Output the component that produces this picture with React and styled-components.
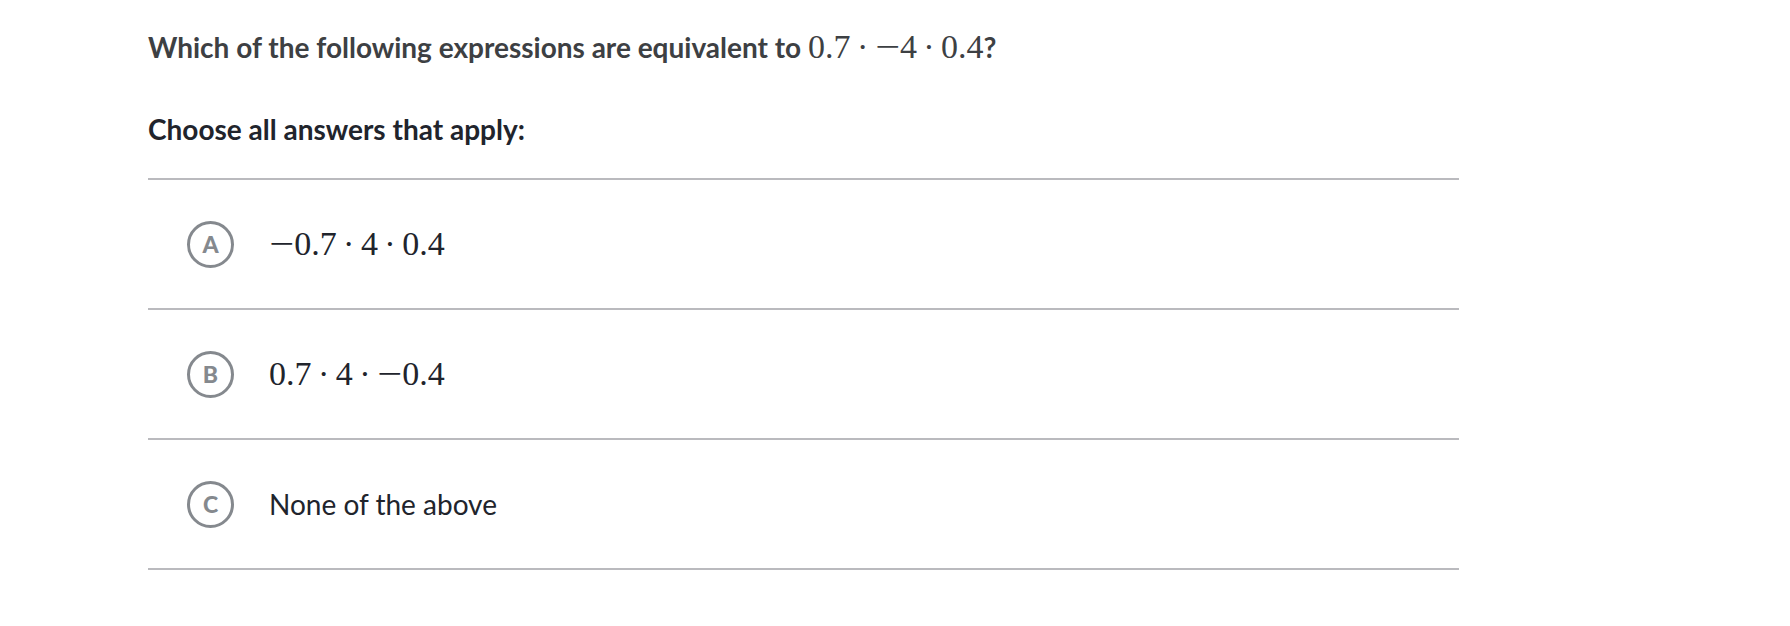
import React from "react";
import styled, { createGlobalStyle } from "styled-components";

const GlobalStyle = createGlobalStyle`
  html, body {
    margin: 0;
    padding: 0;
    background: #ffffff;
  }
  body {
    font-family: Lato, "Noto Sans", sans-serif;
    color: #21242c;
  }
`;

const Page = styled.div`
  padding: 27px 0 0 148px;
  width: 1311px;
`;

const Question = styled.div`
  font-size: 28px;
  font-weight: 700;
  line-height: 40px;
  color: #3d4043;
`;

const Prompt = styled.div`
  margin-top: 42px;
  font-size: 28px;
  font-weight: 700;
  line-height: 40px;
  color: #21242c;
`;

const Choices = styled.ul`
  list-style: none;
  margin: 29px 0 0;
  padding: 0;
  border-bottom: 2px solid #bababe;
`;

const Choice = styled.li`
  display: flex;
  align-items: center;
  gap: 35px;
  height: 128px;
  padding-left: 39px;
  border-top: 2px solid #bababe;
`;

const Letter = styled.span`
  box-sizing: border-box;
  width: 47px;
  height: 47px;
  border-radius: 50%;
  border: 3.5px solid #85898e;
  display: flex;
  align-items: center;
  justify-content: center;
  font-size: 23px;
  font-weight: 900;
  color: #85898e;
  flex-shrink: 0;
`;

const Label = styled.span`
  font-size: 28px;
  line-height: 40px;
  color: #21242c;
`;

const MathText = styled.span`
  font-family: "Liberation Serif", "DejaVu Serif", serif;
  font-weight: 400;
  font-size: 34px;
  line-height: 1;
  white-space: nowrap;
  color: ${(p) => p.$color || "#21242c"};
`;

const Op = styled.span`
  margin: 0 0.19em;
`;

// KaTeX's minus is much longer than the text font's
const Minus = styled.span`
  display: inline-block;
  width: 0.74em;
  text-align: center;
  transform: scaleX(1.3);
`;

const Term = ({ value }) =>
  value.startsWith("−") ? (
    <>
      <Minus>−</Minus>
      {value.slice(1)}
    </>
  ) : (
    value
  );

// terms are joined with a centred dot, like \cdot
const Expr = ({ terms, color }) => (
  <MathText $color={color}>
    {terms.map((t, i) => (
      <React.Fragment key={i}>
        {i > 0 && <Op>·</Op>}
        <Term value={t} />
      </React.Fragment>
    ))}
  </MathText>
);

const choices = [
  { letter: "A", terms: ["−0.7", "4", "0.4"] },
  { letter: "B", terms: ["0.7", "4", "−0.4"] },
  { letter: "C", text: "None of the above" },
];

export default function App() {
  return (
    <>
      <GlobalStyle />
      <Page>
        <Question>
          Which of the following expressions are equivalent to{" "}
          <Expr terms={["0.7", "−4", "0.4"]} color="#3d4043" />?
        </Question>
        <Prompt>Choose all answers that apply:</Prompt>
        <Choices>
          {choices.map((c) => (
            <Choice key={c.letter}>
              <Letter>{c.letter}</Letter>
              {c.text ? <Label>{c.text}</Label> : <Expr terms={c.terms} />}
            </Choice>
          ))}
        </Choices>
      </Page>
    </>
  );
}
